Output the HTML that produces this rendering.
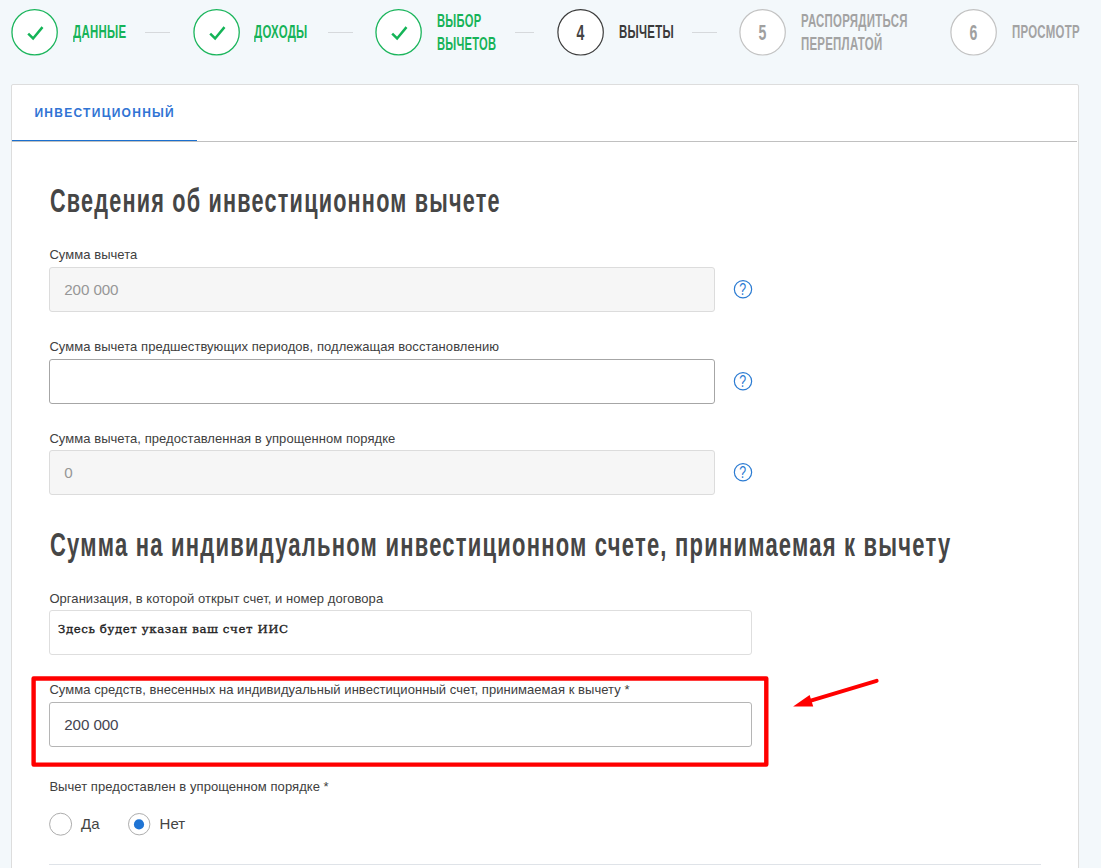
<!DOCTYPE html>
<html lang="ru">
<head>
<meta charset="utf-8">
<title>Вычеты</title>
<style>
*{box-sizing:border-box;margin:0;padding:0}
html,body{width:1101px;height:868px;overflow:hidden;background:#f3f8fb;font-family:"Liberation Sans",sans-serif;}
body{position:relative}
.abs{position:absolute}
.circle{position:absolute;width:48px;height:48px;top:9px}
.circle svg{position:absolute;left:0;top:0}
.num{position:absolute;left:1.1px;top:1px;width:45px;height:45px;text-align:center;line-height:46px;font-weight:bold;font-size:22px;color:#444;transform:scaleX(.64)}
.fut .num{color:#a0a0a0}
.st{position:absolute;font-weight:bold;font-size:17.5px;line-height:23px;white-space:nowrap;transform-origin:0 50%;transform:scaleX(.653);color:#16b358;letter-spacing:.4px}
.st.cur{color:#3a3a3a}
.st.fut{color:#a3a3a3}
.dash{position:absolute;top:32px;height:1px;width:25px;background:#d6d9dc}
.card{position:absolute;left:11px;top:84px;width:1068px;height:800px;background:#fff;border:1px solid #dddddd;border-radius:2px}
.tab{position:absolute;left:34.4px;top:106px;font-weight:bold;font-size:12px;line-height:14px;letter-spacing:1.28px;color:#3174d4;white-space:nowrap}
.h{position:absolute;left:50px;font-weight:bold;font-size:34px;line-height:40px;color:#464646;white-space:nowrap;transform-origin:0 50%;transform:scaleX(.6365);letter-spacing:1.9px}
.lbl{position:absolute;left:49.4px;font-size:13px;line-height:16px;color:#404040;white-space:nowrap;letter-spacing:.055px}
.inp{position:absolute;left:49px;height:45px;border:1px solid #dcdcdc;border-radius:3px;background:#fff;font-size:15.2px;line-height:43px;padding-left:14.2px;color:#454550;letter-spacing:-.09px}
.inp.dis{background:#f6f6f6;color:#979797}
.q{position:absolute;left:732px;width:22px;height:22px}
</style>
</head>
<body>
<!-- stepper -->
<div class="circle" style="left:11px"><svg width="48" height="48" viewBox="0 0 48 48"><circle cx="23.6" cy="23.3" r="22.65" fill="#fff" stroke="#1bb55c" stroke-width="1.3"/><path d="M17.2 24.6 L22.1 29.5 L31.5 18.1" fill="none" stroke="#14b457" stroke-width="2.5"/></svg></div>
<div class="st" style="left:73px;top:21px">ДАННЫЕ</div>
<div class="dash" style="left:145px"></div>
<div class="circle" style="left:193px"><svg width="48" height="48" viewBox="0 0 48 48"><circle cx="23.6" cy="23.3" r="22.65" fill="#fff" stroke="#1bb55c" stroke-width="1.3"/><path d="M17.2 24.6 L22.1 29.5 L31.5 18.1" fill="none" stroke="#14b457" stroke-width="2.5"/></svg></div>
<div class="st" style="left:254.3px;top:21px">ДОХОДЫ</div>
<div class="dash" style="left:328px"></div>
<div class="circle" style="left:375px"><svg width="48" height="48" viewBox="0 0 48 48"><circle cx="23.6" cy="23.3" r="22.65" fill="#fff" stroke="#1bb55c" stroke-width="1.3"/><path d="M17.2 24.6 L22.1 29.5 L31.5 18.1" fill="none" stroke="#14b457" stroke-width="2.5"/></svg></div>
<div class="st" style="left:437px;top:10px;transform:scaleX(.638)">ВЫБОР<br>ВЫЧЕТОВ</div>
<div class="dash" style="left:515px;width:19px"></div>
<div class="circle cur" style="left:557px"><svg width="48" height="48" viewBox="0 0 48 48"><circle cx="23.6" cy="23.3" r="22.7" fill="#fff" stroke="#3c3c3c" stroke-width="1.2"/></svg><div class="num">4</div></div>
<div class="st cur" style="left:619px;top:21px">ВЫЧЕТЫ</div>
<div class="dash" style="left:692px"></div>
<div class="circle fut" style="left:739px"><svg width="48" height="48" viewBox="0 0 48 48"><circle cx="23.6" cy="23.3" r="22.7" fill="#fff" stroke="#c2c2c2" stroke-width="1.2"/></svg><div class="num">5</div></div>
<div class="st fut" style="left:801px;top:10px">РАСПОРЯДИТЬСЯ<br>ПЕРЕПЛАТОЙ</div>
<div class="circle fut" style="left:950px"><svg width="48" height="48" viewBox="0 0 48 48"><circle cx="23.6" cy="23.3" r="22.7" fill="#fff" stroke="#c2c2c2" stroke-width="1.2"/></svg><div class="num">6</div></div>
<div class="st fut" style="left:1012px;top:21px">ПРОСМОТР</div>

<!-- card -->
<div class="card"></div>
<div class="abs" style="left:12px;top:141px;width:1065px;height:1px;background:#c0c0c0"></div>
<div class="abs" style="left:12px;top:140px;width:185px;height:1px;background:#1b6fce"></div>
<div class="tab">ИНВЕСТИЦИОННЫЙ</div>

<div class="h" style="top:180px">Сведения об инвестиционном вычете</div>

<div class="lbl" style="top:247px">Сумма вычета</div>
<div class="inp dis" style="top:267px;width:666px">200 000</div>
<svg class="q" style="top:278px" viewBox="0 0 22 22"><circle cx="11" cy="11.2" r="8.65" fill="#fff" stroke="#2b7bd2" stroke-width="1.2"/><text x="0" y="17.1" text-anchor="middle" transform="translate(10.75 0) scale(.75 1)" font-family="Liberation Sans, sans-serif" font-size="16.5" fill="#2b7bd2">?</text></svg>

<div class="lbl" style="top:339px">Сумма вычета предшествующих периодов, подлежащая восстановлению</div>
<div class="inp" style="top:359px;width:666px;border-color:#a6a6a6"></div>
<svg class="q" style="top:370px" viewBox="0 0 22 22"><circle cx="11" cy="11.2" r="8.65" fill="#fff" stroke="#2b7bd2" stroke-width="1.2"/><text x="0" y="17.1" text-anchor="middle" transform="translate(10.75 0) scale(.75 1)" font-family="Liberation Sans, sans-serif" font-size="16.5" fill="#2b7bd2">?</text></svg>

<div class="lbl" style="top:431px">Сумма вычета, предоставленная в упрощенном порядке</div>
<div class="inp dis" style="top:450px;width:666px">0</div>
<svg class="q" style="top:461px" viewBox="0 0 22 22"><circle cx="11" cy="11.2" r="8.65" fill="#fff" stroke="#2b7bd2" stroke-width="1.2"/><text x="0" y="17.1" text-anchor="middle" transform="translate(10.75 0) scale(.75 1)" font-family="Liberation Sans, sans-serif" font-size="16.5" fill="#2b7bd2">?</text></svg>

<div class="h" style="top:523.5px;transform:scaleX(.6466)">Сумма на индивидуальном инвестиционном счете, принимаемая к вычету</div>

<div class="lbl" style="top:591px">Организация, в которой открыт счет, и номер договора</div>
<div class="inp" style="top:610px;width:703px;border-color:#dedede"></div>
<div class="abs" style="left:58px;top:621px;font-family:'DejaVu Serif',serif;font-weight:normal;-webkit-text-stroke:.35px #222;font-size:11.8px;letter-spacing:.57px;line-height:16px;color:#222;white-space:nowrap">Здесь будет указан ваш счет ИИС</div>

<svg class="abs" style="left:0;top:660px" width="800" height="120" viewBox="0 660 800 120"><rect x="33.6" y="678.5" width="732.7" height="86.1" rx="0" fill="none" stroke="#ff0000" stroke-width="4.4" stroke-linejoin="round"/></svg>
<div class="lbl" style="top:682px">Сумма средств, внесенных на индивидуальный инвестиционный счет, принимаемая к вычету *</div>
<div class="inp" style="top:702px;width:703px;border-color:#b5b5b5">200 000</div>

<svg class="abs" style="left:780px;top:670px" width="110" height="50" viewBox="780 670 110 50"><path d="M876.6 680.8 L810 700.9" stroke="#ff0000" stroke-width="4" stroke-linecap="round" fill="none"/><path d="M793.1 706.4 L809.6 695 L813.2 706.4 Z" fill="#ff0000"/></svg>

<div class="lbl" style="top:779px">Вычет предоставлен в упрощенном порядке *</div>
<svg class="abs" style="left:40px;top:805px" width="130" height="40" viewBox="40 805 130 40"><circle cx="60.6" cy="824.2" r="11" fill="#fff" stroke="#adadad" stroke-width="1"/><circle cx="139.2" cy="824.2" r="10.7" fill="#fff" stroke="#adadad" stroke-width="1"/><circle cx="139" cy="824.4" r="5.1" fill="#1f74d4"/></svg>
<div class="abs" style="left:81px;top:815px;font-size:15px;line-height:18px;color:#444">Да</div>
<div class="abs" style="left:159.6px;top:815px;font-size:15px;line-height:18px;color:#444">Нет</div>

<div class="abs" style="left:49px;top:864px;width:992px;height:1px;background:#dfe3e8"></div>
</body>
</html>
